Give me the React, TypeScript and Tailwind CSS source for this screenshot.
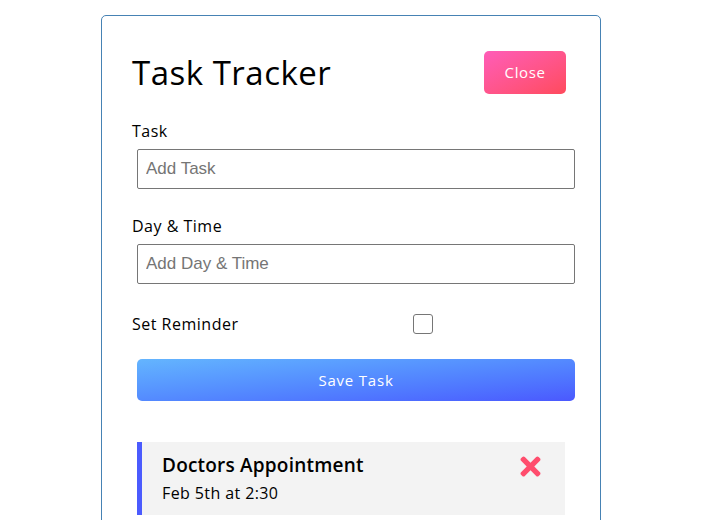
import { FaTimes } from "react-icons/fa";

const font = { fontFamily: '"Open Sans", "Noto Sans", sans-serif' };

function FormField({ label, placeholder }: { label: string; placeholder: string }) {
  return (
    <div className="mb-[25px]">
      <label className="block text-[16px] leading-[25px] tracking-[0.5px] text-black">{label}</label>
      <input
        type="text"
        placeholder={placeholder}
        className="m-[5px] block h-10 w-[438px] rounded-[2px] border border-[#767676] px-[8px] py-[3px] font-['Liberation_Sans',Arial,sans-serif] text-[17px] text-black placeholder:text-[#757575] focus:outline-none"
      />
    </div>
  );
}

export default function App() {
  return (
    <div className="min-h-screen bg-white pt-[15px]" style={font}>
      <div className="mx-auto w-[500px] rounded-[5px] border border-[#4682b4] p-[30px] pb-[40px]">
        <header className="mb-[20px] flex items-center justify-between">
          <h1 className="text-[33px] font-medium leading-[48px] tracking-[0.5px] text-black">Task Tracker</h1>
          <button className="m-[5px] mr-[4px] h-[43px] w-[82px] rounded-[5px] bg-gradient-to-br from-[#ff5cb8] to-[#ff4a5c] text-[15px] tracking-[0.6px] text-white">
            Close
          </button>
        </header>

        <form>
          <FormField label="Task" placeholder="Add Task" />
          <FormField label="Day & Time" placeholder="Add Day & Time" />

          <div className="mb-[20px] flex h-[30px] items-center">
            <label className="w-[281px] text-[16px] leading-[25px] tracking-[0.5px]">Set Reminder</label>
            <span className="block h-5 w-5 rounded-[3px] border border-[#767676] bg-white" />
          </div>

          <button
            type="button"
            className="ml-[5px] block h-[42px] w-[438px] rounded-[5px] bg-gradient-to-br from-[#64b5fe] to-[#4b58fe] text-[15px] tracking-[0.8px] text-white"
          >
            Save Task
          </button>
        </form>

        <div className="mt-[41px] ml-[5px] flex h-[73px] w-[428px] items-start justify-between border-l-[5px] border-[#4b5bfe] bg-[#f3f3f3] pl-[20px] pr-[20px] pt-[10px]">
          <div>
            <h3 className="text-[19px] font-semibold leading-[27px] tracking-[0.2px] text-black">Doctors Appointment</h3>
            <p className="mt-[2px] text-[16px] leading-[24px] tracking-[0.4px] text-black">Feb 5th at 2:30</p>
          </div>
          <FaTimes className="text-[29px] text-[#ff4d6d]" />
        </div>
      </div>
    </div>
  );
}
